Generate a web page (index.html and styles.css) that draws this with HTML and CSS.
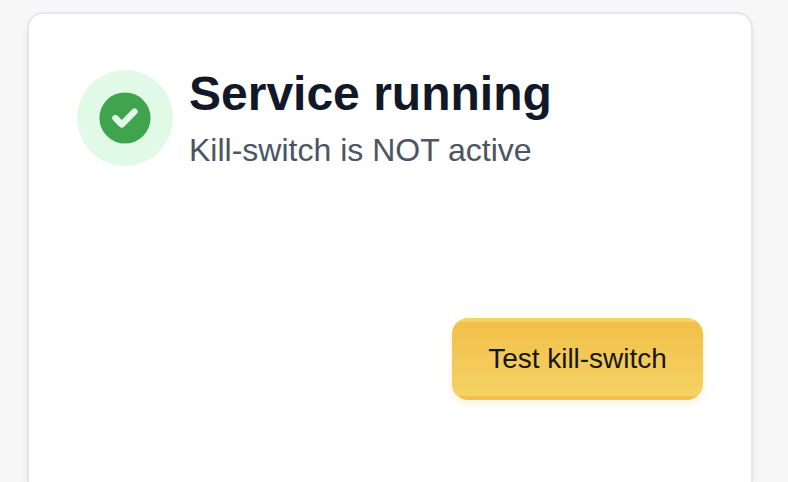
FILE: index.html
```html
<!DOCTYPE html>
<html lang="en">
<head>
<meta charset="utf-8">
<title>Service status</title>
<link rel="stylesheet" href="styles.css">
</head>
<body>
<main class="card">
  <header class="status">
    <span class="status-icon">
      <svg width="64" height="64" viewBox="0 0 20 20"><path fill="#40a34d" fill-rule="evenodd" clip-rule="evenodd" d="M10 18a8 8 0 100-16 8 8 0 000 16zm3.707-9.293a1 1 0 00-1.414-1.414L9 10.586 7.707 9.293a1 1 0 00-1.414 1.414l2 2a1 1 0 001.414 0l4-4z"/></svg>
    </span>
    <div class="status-text">
      <h1>Service running</h1>
      <p>Kill-switch is NOT active</p>
    </div>
  </header>
  <div class="actions"><button class="button" type="button">Test kill-switch</button></div>
</main>
</body>
</html>
```
FILE: styles.css
```css
* { box-sizing: border-box; }
body {
  display: flow-root;
  margin: 0;
  height: 482px;
  background: #f7f7f7;
  font-family: "Liberation Sans", Arial, sans-serif;
}
.card {
  width: 726px;
  height: 470px;
  margin: 12px 0 0 27px;
  padding: 56px 48px 0;
  background: #fff;
  border: 2px solid #e5e5ea;
  border-bottom: 0;
  border-radius: 16px 16px 0 0;
  box-shadow: 0 8px 12px -2px rgba(0, 0, 0, .08);
}
.status { display: flex; gap: 16px; }
.status-icon {
  display: flex;
  align-items: center;
  justify-content: center;
  width: 96px;
  height: 96px;
  border-radius: 50%;
  background: #e1fae8;
}
h1, p { margin: 0; white-space: nowrap; }
h1 { font-size: 48px; line-height: 48px; color: #111827; }
p { margin-top: 8px; font-size: 32px; line-height: 48px; color: #4b5563; }
.actions { display: flex; justify-content: flex-end; margin-top: 144px; }
/* The gradient repeats under the transparent border, giving the edge bands. */
.button {
  width: 251px;
  height: 82px;
  padding: 0;
  border: 4px solid transparent;
  border-radius: 16px;
  background: linear-gradient(#f2c04a, #f5d264);
  box-shadow: 0 4px 10px rgba(242, 192, 74, .2);
  font: 28px "Liberation Sans", Arial, sans-serif;
  letter-spacing: -.03px;
  color: #171717;
}
```
